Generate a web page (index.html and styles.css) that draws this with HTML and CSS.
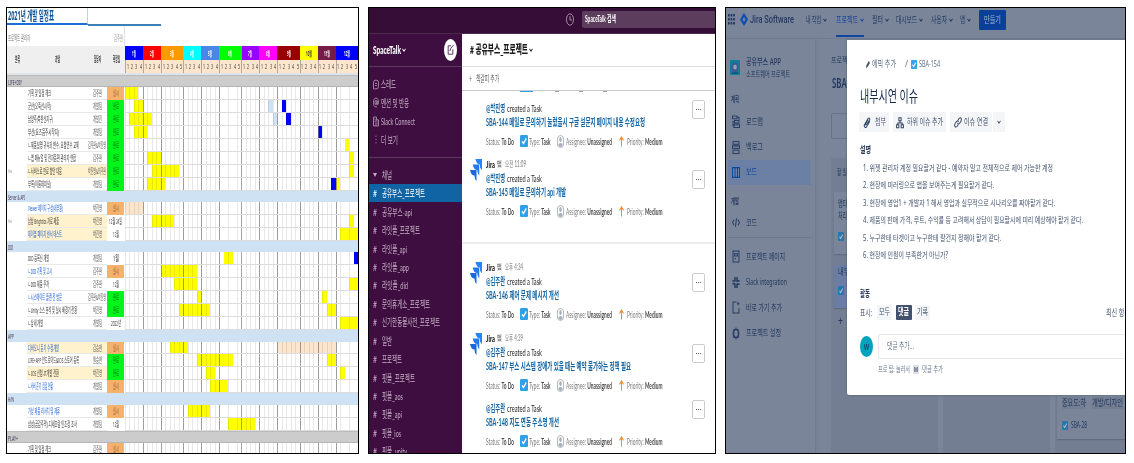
FILE: index.html
```html
<!DOCTYPE html>
<html lang="ko">
<head>
<meta charset="utf-8">
<title>Workspace</title>
<link rel="stylesheet" href="styles.css">
</head>
<body>
<svg class="defs" width="0" height="0" aria-hidden="true">
  <defs>
    <symbol id="check" viewBox="0 0 16 16" preserveAspectRatio="none"><rect width="16" height="16" rx="2" fill="#2f9fe8"/><path d="M4 8.5l3 3 5.500-7" fill="none" stroke="#fff" stroke-width="2.200"/></symbol>
    <symbol id="person" viewBox="0 0 16 26" preserveAspectRatio="none"><rect x="1" y="1" width="14" height="24" rx="7" fill="#fff" stroke="#a8b2bd" stroke-width="2"/><ellipse cx="8" cy="9" rx="3" ry="5" fill="#a8b2bd"/><path d="M3 20q0-4 5-4t5 4q-2 4-5 4t-5-4z" fill="#a8b2bd"/></symbol>
    <symbol id="up" viewBox="0 0 10 20" preserveAspectRatio="none"><path d="M5 19V3M1 8l4-6 4 6" fill="none" stroke="#ee8a2c" stroke-width="2"/></symbol>
    <symbol id="jira" viewBox="0 0 24 44" preserveAspectRatio="none"><path d="M11 0h13v22l-4-5v-9h-4z" fill="#2684ff"/><path d="M11 0h13v22q-4-3-4-11-7 0-9-11z" fill="#2684ff"/><path d="M5.500 11h13v22q-4-3-4-11-7 0-9-11z" fill="#2079f2"/><path d="M0 22h13v22q-4-3-4-11-7 0-9-11z" fill="#1668dc"/></symbol>
    <symbol id="down" viewBox="0 0 8 8" preserveAspectRatio="none"><path d="M1 2.500l3 3 3-3" fill="none" stroke="currentColor" stroke-width="1.600"/></symbol>
  </defs>
</svg>
<main class="shots">
  <section class="panel sheet">
    <div class="sheet-title"><div class="sel"><span class="t" data-w="46">2021년 개발 일정표</span></div><div class="rule"></div></div>
    <div class="sheet-owner"><span class="t" data-w="22">프로젝트 관리자</span><span class="t" data-w="9">김주완</span></div>
    <div class="sheet-head">
      <div class="hcells"><span class="h"><span class="t" data-w="5">분류</span></span><span class="h"><span class="t" data-w="5">과업</span></span><span class="h"><span class="t" data-w="7">담당자</span></span><span class="h"><span class="t" data-w="7">확정일</span></span></div>
      <div class="cal"><div class="months" id="months"></div><div class="weeks" id="weeks"></div></div>
    </div>
    <div class="freeze"></div>
    <div id="rows"></div>
  </section>

  <section class="panel slack">
    <div class="sl-top">
      <svg class="clock" viewBox="0 0 16 24" preserveAspectRatio="none"><ellipse cx="8" cy="12" rx="7" ry="10.500"/><path d="M8 6v7h4"/></svg>
      <div class="sl-search"><span class="t" data-w="31">SpaceTalk 검색</span></div>
    </div>
    <div class="sl-body">
      <aside class="sl-side">
        <div class="ws"><span class="t" data-w="28">SpaceTalk</span><svg class="dn"><use href="#down"/></svg><div class="compose"><svg viewBox="0 0 12 20" preserveAspectRatio="none"><path d="M7 3H2v14h8V9M5 12l1-4 5-6"/></svg></div></div>
        <nav class="sl-nav">
          <div class="it"><svg viewBox="0 0 12 20" preserveAspectRatio="none"><path d="M3 18H1V6q0-4 5-4t5 4v8q0 4-5 4zM4 8h4M4 12h4"/></svg><span class="t" data-w="15">스레드</span></div>
          <div class="it"><svg viewBox="0 0 12 20" preserveAspectRatio="none"><ellipse cx="6" cy="10" rx="2" ry="4"/><path d="M8 7v6q3 2 3-3 0-8-5-8t-5 8 5 8h2"/></svg><span class="t" data-w="28">멘션 및 반응</span></div>
          <div class="it"><svg viewBox="0 0 12 20" preserveAspectRatio="none"><path d="M1 18V2h6v5M1 18h10V7H6v11M3 6h2M3 10h1M8 11h1M8 14h1"/></svg><span class="t" data-w="34">Slack Connect</span></div>
          <div class="it"><svg viewBox="0 0 12 20" preserveAspectRatio="none"><path d="M6 3v2M6 9v2M6 15v2"/></svg><span class="t" data-w="17">더 보기</span></div>
        </nav>
        <div class="ch-head"><i></i><span class="t" data-w="10">채널</span></div>
        <div id="channels"></div>
      </aside>
      <div class="sl-main">
        <div class="ch-title"><span class="t" data-w="58">#&nbsp;공유부스_프로젝트</span><svg class="dn"><use href="#down"/></svg></div>
        <div class="bm"><span class="t" data-w="3">+</span><span class="t" data-w="23">책갈피 추가</span></div>
        <div class="feed">
          <div class="cut"><i></i><b></b><b></b><b></b></div>
          <div id="feed"></div>
        </div>
      </div>
    </div>
  </section>

  <section class="panel jira">
    <header class="j-nav">
      <svg class="apps" viewBox="0 0 7 11" preserveAspectRatio="none"><path d="M0 0h1.700v2.500H0zM2.600 0h1.700v2.500H2.600zM5.200 0h1.700v2.500H5.200zM0 4h1.700v2.500H0zM2.600 4h1.700v2.500H2.600zM5.200 4h1.700v2.500H5.200zM0 8h1.700v2.500H0zM2.600 8h1.700v2.500H2.600zM5.200 8h1.700v2.500H5.200z"/></svg>
      <svg class="dia" viewBox="0 0 16 26" preserveAspectRatio="none"><path d="M8 0l8 13-8 13L0 13z" fill="#0c4bb0"/><path d="M8 8l3 5-3 5-3-5z" fill="#7a8599"/></svg>
      <span class="t brand" data-w="44">Jira Software</span>
      <div class="menu m1"><span class="t" data-w="15">내 작업</span><svg class="dn"><use href="#down"/></svg></div>
      <div class="menu m2 on"><span class="t" data-w="22">프로젝트</span><svg class="dn"><use href="#down"/></svg></div>
      <div class="menu m3"><span class="t" data-w="11">필터</span><svg class="dn"><use href="#down"/></svg></div>
      <div class="menu m3"><span class="t" data-w="21">대시보드</span><svg class="dn"><use href="#down"/></svg></div>
      <div class="menu m3"><span class="t" data-w="16">사용자</span><svg class="dn"><use href="#down"/></svg></div>
      <div class="menu m3"><span class="t" data-w="5">앱</span><svg class="dn"><use href="#down"/></svg></div>
      <div class="make"><span class="t" data-w="17">만들기</span></div>
    </header>
    <div class="j-body">
      <aside class="j-side">
        <div class="proj"><svg viewBox="0 0 10 15" preserveAspectRatio="none"><rect width="10" height="15" rx="1" fill="#087f9d"/><ellipse cx="5" cy="7.500" rx="3.400" ry="5" fill="#514f96"/><ellipse cx="5" cy="7" rx="1.800" ry="2.600" fill="#8ba5bd"/><path d="M2 13h6" stroke="#20376c"/></svg><div><span class="t pn" data-w="35">공유부스 APP</span><span class="t ps" data-w="44">소프트웨어 프로젝트</span></div></div>
        <div class="grp g1"><span class="t" data-w="8">계획</span></div>
        <div class="ji"><svg viewBox="0 0 16 24" preserveAspectRatio="none"><path d="M1 2h9v5H1zM5 10h9v5H5zM4 18h11v5H4zM10 4h4v6M5 12H2v8h2"/></svg><span class="t" data-w="17">로드맵</span></div>
        <div class="ji"><svg viewBox="0 0 16 24" preserveAspectRatio="none"><path d="M2 1h12v5H2zM1 9h14v5H1zM2 17h12v6H2z"/></svg><span class="t" data-w="17">백로그</span></div>
        <div class="ji on"><svg viewBox="0 0 16 24" preserveAspectRatio="none"><path d="M1 3h14v18H1zM6 3v18M11 3v18"/></svg><span class="t" data-w="11">보드</span></div>
        <div class="grp g2"><span class="t" data-w="8">개발</span></div>
        <div class="ji code"><svg viewBox="0 0 16 24" preserveAspectRatio="none"><path d="M4 7l-3 5 3 5M12 7l3 5-3 5M9 4L7 20"/></svg><span class="t" data-w="11">코드</span></div>
        <div class="ji low"><svg viewBox="0 0 16 24" preserveAspectRatio="none"><path d="M2 2h12v20H2zM5 7h6v4H5zM5 16h3"/></svg><span class="t" data-w="39">프로젝트 페이지</span></div>
        <div class="ji low"><svg viewBox="0 0 16 24" preserveAspectRatio="none"><path class="bold" d="M6 2v8M1 9h5M10 2v9M10 9h5M6 14v8M1 14h5M10 14v8M10 15h5"/></svg><span class="t" data-w="41">Slack integration</span></div>
        <div class="ji low"><svg viewBox="0 0 16 24" preserveAspectRatio="none"><path d="M9 2H2v20h12v-9M12 2v6M15 5h-5"/></svg><span class="t" data-w="36">바로 가기 추가</span></div>
        <div class="ji low"><svg viewBox="0 0 16 24" preserveAspectRatio="none"><ellipse class="bold" cx="8" cy="12" rx="5" ry="7.500"/><path d="M8 1v3M8 20v3M1 12h2M13 12h2M3 4l2 3M13 4l-2 3M3 20l2-3M13 20l-2-3"/></svg><span class="t" data-w="35">프로젝트 설정</span></div>
      </aside>
      <div class="j-board">
        <div class="crumb"><span class="t" data-w="22">프로젝트</span></div>
        <div class="bt"><span class="t" data-w="31">SBA 보드</span></div>
        <div class="find"></div>
        <div class="cols">
          <div class="col">
            <div class="ct"><span class="t" data-w="10">할 일</span></div>
            <div class="card c1"><span class="t" data-w="14">앱타이</span><span class="t" data-w="9">처리</span><svg class="ck"><use href="#check"/></svg></div>
            <div class="card c2"><span class="t" data-w="17">내부시</span><svg class="ck"><use href="#check"/></svg></div>
            <div class="add"><span class="t" data-w="5">+</span></div>
          </div>
          <div class="col"></div>
          <div class="col last"><div class="card c3"><div class="tags"><span class="t" data-w="24">중요도:하</span><span class="t" data-w="31">개발/디자인</span></div><div class="key"><svg class="ck"><use href="#check"/></svg><span class="t" data-w="16">SBA-28</span></div></div></div>
        </div>
      </div>
    </div>
    <article class="modal">
      <div class="bc"><svg class="pen" viewBox="0 0 10 18" preserveAspectRatio="none"><path d="M0 18l1-6 6-10 3 4-6 10z"/></svg><span class="t" data-w="24">에픽 추가</span><span class="t sl" data-w="3">/</span><svg class="ck"><use href="#check"/></svg><span class="t" data-w="21">SBA-154</span></div>
      <h1><span class="t" data-w="58">내부시연 이슈</span></h1>
      <div class="acts">
        <div class="ab b1"><svg viewBox="0 0 14 22" preserveAspectRatio="none"><path d="M12 9l-6 10q-3 2-4-3l7-12q3-2 3 2L6 15q-2 1-2-1l5-8"/></svg><span class="t" data-w="11">첨부</span></div>
        <div class="ab b2"><svg viewBox="0 0 14 22" preserveAspectRatio="none"><path d="M5 3h4v5H5zM1 15h4v5H1zM9 15h4v5H9zM7 8v4M3 15v-3h8v3"/></svg><span class="t" data-w="36">하위 이슈 추가</span></div>
        <div class="ab b3"><svg viewBox="0 0 14 22" preserveAspectRatio="none"><path d="M6 9l3-5q3-3 4 2 0 3-3 6-2 3-4 0M8 13l-3 5q-3 2-4-2 0-3 3-6 2-3 4 0"/></svg><span class="t" data-w="24">이슈 연결</span></div>
        <div class="ab b4"><svg class="dn"><use href="#down"/></svg></div>
      </div>
      <h2 class="h-desc"><span class="t" data-w="11">설명</span></h2>
      <div class="list">
        <p><span class="t" data-w="190">1. 위젯 관리자 계정 필요할거 같다 - 예약자 말고 전체적으로 제어 가능한 계정</span></p>
        <p><span class="t" data-w="131">2. 현장에 미러링으로 앱을 보여주는게 필요할거 같다.</span></p>
        <p><span class="t" data-w="192">3. 현장에 영업1 + 개발자 1 해서 영업과 실무적으로 시나리오를 짜야할거 같다.</span></p>
        <p><span class="t" data-w="220">4. 제품의 판매 가격, 루트, 수익률 등 고려해서 상담이 필요할시에 미리 예상해야 할거 같다.</span></p>
        <p><span class="t" data-w="138">5. 누구한테 타겟이고 누구한테 팔건지 정해야 할거 같다.</span></p>
        <p><span class="t" data-w="85">6. 현장에 인원이 부족한거 아닌가?</span></p>
      </div>
      <h2 class="h-act"><span class="t" data-w="10">활동</span></h2>
      <div class="filter"><span class="t lab" data-w="12">표시:</span><div class="pill"><span class="t" data-w="11">모두</span></div><div class="pill dark"><span class="t" data-w="11">댓글</span></div><div class="pill"><span class="t" data-w="11">기록</span></div><span class="t sort" data-w="24">최신 항목</span></div>
      <div class="cm"><div class="av"><span class="t" data-w="5">W</span></div><div class="box"><span class="t" data-w="27">댓글 추가...</span></div></div>
      <div class="tip"><span class="t" data-w="32">프로 팁: 눌러서</span><kbd><span class="t" data-w="4">M</span></kbd><span class="t" data-w="21">댓글 추가</span></div>
    </article>
  </section>
</main>
<script src="app.js"></script>
</body>
</html>
```

FILE: styles.css
```css
* { box-sizing: border-box; }
body { margin: 0; background: #fff; font-family: "Noto Sans", "Noto Sans CJK KR", sans-serif; overflow: hidden; }
.defs { position: absolute; }
.t { display: inline-block; white-space: nowrap; flex: none; text-align: left; }
.t > span { display: inline-block; transform-origin: 0 50%; }
svg { display: block; flex: none; }
.dn { width: 4px; height: 6px; }

.shots { display: flex; padding: 7px 0 0 6px; }
.panel { height: 447px; border: 1px solid #000; overflow: hidden; flex: none; position: relative; }
.sheet { width: 353px; }
.slack { width: 348px; margin-left: 9px; }
.jira { width: 401px; margin-left: 9px; }

/* schedule sheet */
.sheet { font-size: 7.800px; line-height: 13px; color: #333; }
.sheet-title { display: flex; height: 18px; }
.sel { width: 81px; border-right: 1px solid #bcd1ee; border-bottom: 2px solid #1c6fd6; height: 17px; padding-left: 1px; font-size: 13px; line-height: 15px; font-weight: 700; color: #0b5394; }
.rule { width: 73px; height: 2px; margin-top: 16px; background: #3d7fb5; }
.sheet-owner { display: flex; justify-content: space-between; width: 118px; height: 20px; padding: 6px 1px 0; color: #777; border-right: 1px solid #dde4ee; }
.sheet-owner .t:last-child { color: #999; }
.sheet-head { display: flex; height: 27px; }
.hcells { display: grid; grid-template-columns: 20px 60px 20px 18px; width: 118px; background: #efefef; font-weight: 700; color: #333; padding-top: 7px; }
.h { display: flex; justify-content: center; }
.cal { width: 233px; }
.months { display: grid; grid-template-columns: repeat(52, 1fr); height: 14px; }
.mo { display: flex; justify-content: center; align-items: center; color: #fff; font-size: 7px; font-weight: 700; }
.weeks { display: grid; grid-template-columns: repeat(52, 1fr); height: 13px; background: #fce5cd; font-size: 6.500px; line-height: 13px; color: #333; }
.wk { display: flex; justify-content: center; }
.wk.first { border-left: 1px solid #b5a79a; }
.freeze { height: 2px; background: #dfe4ea; }
.band { height: 11.400px; background: #cfe2f3; color: #403050; line-height: 12px; padding-left: 1px; }
.band.gray { height: 12.400px; background: #ccc; line-height: 12px; border-top: 1px solid #bbb; border-bottom: 1px solid #b5b5b5; }
.row { display: flex; height: 12.940px; }
.tag { width: 20px; padding-left: 1px; font-size: 5px; color: #999; }
.task { width: 60px; border-bottom: 1px solid #e8e8e8; padding-left: 1px; }
.who { width: 20px; text-align: center; border-bottom: 1px solid #e8e8e8; color: #555; }
.st { width: 17px; text-align: center; margin-right: 1px; }
.hl .task, .hl .who { background: #fff2cc; }
.link { color: #1d5fd0; text-decoration: underline; }
.st.done { background: #00f51a; color: #087012; }
.st.open { background: #f6b26b; color: #8d6138; }
.track { position: relative; width: 233px; display: grid; grid-template-columns: repeat(52, 1fr); border-bottom: 1px solid #dcdcdc; }
.track::after { content: ""; position: absolute; inset: 0; background: var(--months), repeating-linear-gradient(90deg, rgba(0,0,0,.09) 0 .9px, transparent .9px 4.481px); }
.track { --months:
  linear-gradient(#777a, #777a) 17.500px 0 / 1px 100% no-repeat, linear-gradient(#777a, #777a) 35.500px 0 / 1px 100% no-repeat,
  linear-gradient(#777a, #777a) 58px 0 / 1px 100% no-repeat, linear-gradient(#777a, #777a) 76px 0 / 1px 100% no-repeat,
  linear-gradient(#777a, #777a) 94px 0 / 1px 100% no-repeat, linear-gradient(#777a, #777a) 116px 0 / 1px 100% no-repeat,
  linear-gradient(#777a, #777a) 134px 0 / 1px 100% no-repeat, linear-gradient(#777a, #777a) 152px 0 / 1px 100% no-repeat,
  linear-gradient(#777a, #777a) 175px 0 / 1px 100% no-repeat, linear-gradient(#777a, #777a) 193px 0 / 1px 100% no-repeat,
  linear-gradient(#777a, #777a) 211px 0 / 1px 100% no-repeat; }
.bar { grid-row: 1; background: #ff0; }
.bar.b { background: #00f; }
.bar.l { background: #cfe2f3; }
.bar.p { background: #fce5cd; }

/* chat */
.slack { font-family: Lato, "Noto Sans CJK KR", sans-serif; font-size: 10px; line-height: 14px; color: #1d1c1d; }
.sl-top { height: 26px; background: #350d36; display: flex; padding: 3px 0 0 197px; border-bottom: 1px solid #4d2a4e; }
.clock { width: 8px; height: 13px; margin-top: 2px; fill: none; stroke: #c5b6c6; stroke-width: 1.500; }
.sl-search { margin-left: 8px; flex: 1; height: 17px; background: #5d3d5e; border-radius: 2px 0 0 2px; color: #fff; padding: 0 3px; line-height: 16px; font-size: 9.500px; font-weight: 700; }
.sl-body { display: flex; height: 419px; }
.sl-side { width: 93px; background: #3f0e40; color: #c4afc5; font-size: 10px; overflow: hidden; }
.ws { height: 33px; display: flex; align-items: center; padding-left: 4px; border-bottom: 1px solid #5c3a5d; color: #fff; font-weight: 900; font-size: 12px; }
.ws .dn, .ch-title .dn { margin-left: 1px; }
.compose { margin-left: 38px; width: 13px; height: 22px; border-radius: 50%; background: #fff; display: flex; align-items: center; justify-content: center; }
.compose svg { width: 7px; height: 12px; fill: none; stroke: #3f0e40; stroke-width: 1.400; }
.sl-nav { height: 91px; padding-top: 8px; border-bottom: 1px solid #5c3a5d; }
.it { display: flex; align-items: center; height: 18.500px; padding-left: 4px; gap: 3px; }
.it svg { width: 6px; height: 11px; margin-right: -1px; fill: none; stroke: #b9a3ba; stroke-width: 1.500; }
.it .t { margin-left: 0; }
.ch-head { display: flex; align-items: center; height: 26px; padding: 8px 0 0 4px; }
.ch-head i { border: 2px solid transparent; border-top: 4px solid #c4afc5; border-bottom: 0; margin-right: 5px; }
.ch { display: flex; align-items: center; height: 18.450px; padding-left: 4px; gap: 5px; }
.ch.on { background: #1164a3; color: #fff; }
.sl-main { width: 253px; }
.ch-title { height: 33px; display: flex; align-items: center; padding-left: 8px; border-bottom: 1px solid #ddd; font-weight: 900; font-size: 12px; }
.bm { height: 24px; display: flex; align-items: center; padding-left: 7px; gap: 4px; border-bottom: 1px solid #ccc; color: #616061; font-size: 9px; }
.cut { height: 10px; display: flex; padding-left: 58px; align-items: flex-start; }
.cut i { width: 13px; height: 1px; background: #2d9ee0; margin-right: 22px; }
.cut b { width: 4px; height: 1px; background: #999; margin-right: 20px; }
.msg { display: flex; padding-left: 8px; }
.pic { width: 12px; margin-right: 4px; padding-top: 2px; }
.pic svg { width: 12px; height: 22px; }
.mb { width: 206px; }
.l1, .l2, .l3 { height: 14px; display: flex; align-items: center; }
.who2 { font-weight: 900; margin-right: 2px; }
.app { background: #e4e4e4; color: #666; font-size: 6px; line-height: 8px; margin-right: 3px; }
.tm { color: #777; font-size: 8.500px; }
.at { color: #1264a3; font-weight: 700; margin-right: 2px; }
.l2 { color: #1264a3; font-weight: 700; font-size: 10.500px; }
.l3 { margin-top: 6px; color: #7c7c7c; font-size: 9.500px; }
.l3 b { font-weight: 700; color: #4a4a4a; }
.l3 .c { width: 8px; height: 12px; margin: -2px 1px 0 6px; }
.l3 .p { width: 7px; height: 13px; margin: -2px 2px 0 6px; }
.l3 .u { width: 5px; height: 11px; margin: -2px 3px 0 7px; }
.more { width: 13px; height: 19px; border: 1px solid #ccc; border-radius: 2px; display: flex; align-items: center; justify-content: center; gap: .6px; margin-top: 13px; }
.more i { width: 1.400px; height: 1.500px; background: #666; }
.nohead .more { margin-top: -1px; }
.sep { height: 2px; background: #ececec; margin-top: 23px; margin-bottom: 16px; }

/* board */
.jira { background: #7a8599; color: #23385e; font-size: 9px; line-height: 12px; }
.j-nav { height: 31px; display: flex; align-items: flex-start; padding: 6px 0 0 2px; border-bottom: 1px solid #6f7b91; line-height: 12px; }
.apps { width: 7px; height: 11px; fill: #213760; }
.dia { width: 8px; height: 13px; margin: -1px 2px 0 5px; }
.brand { font-family: Roboto, sans-serif; font-size: 11px; font-weight: 500; color: #253a62; }
.menu { display: flex; align-items: center; height: 24px; padding-bottom: 12px; gap: 2px; }
.m1 { margin-left: 12px; }
.m2 { margin-left: 9px; height: 23px; }
.m3 { margin-left: 7.500px; }
.menu.on { color: #0c469d; border-bottom: 2px solid #0c469d; padding-bottom: 9px; }
.make { background: #0b409a; color: #a9b9d6; margin: -4px 0 0 8px; height: 20px; width: 27px; border-radius: 1px; padding-left: 5px; line-height: 20px; }
.j-body { display: flex; height: 414px; }
.j-side { width: 90px; border-right: 1px solid #707c92; box-shadow: 1px 0 2px #717d9388; padding-top: 17px; }
.proj { display: flex; padding-left: 4px; gap: 6px; height: 37px; line-height: 12px; }
.proj > svg { width: 10px; height: 15px; margin-top: 4px; }
.proj .t { display: block; }
.pn { font-weight: 500; }
.ps { font-size: 8px; }
.grp { padding-left: 5px; font-size: 7.500px; font-weight: 700; height: 16px; }
.ji { display: flex; align-items: center; height: 25.400px; padding-left: 4px; gap: 6px; margin: 0 4px 0 2px; }
.ji svg { width: 8px; height: 13px; fill: none; stroke: #263c65; stroke-width: 1.900; }
.ji .bold { stroke-width: 3; }
.ji.on { background: #6c80a6; color: #0c469d; }
.ji.on svg { stroke: #0c469d; }
.g2 { padding-top: 10px; height: 23px; }
.ji.code { height: 30px; border-bottom: 1px solid #6c788e; margin-bottom: 6px; }
.j-board { padding: 15px 0 0 15px; width: 309px; }
.crumb { height: 20px; font-size: 8px; }
.bt { height: 39px; font-size: 14px; line-height: 18px; font-weight: 600; padding-left: 1px; }
.find { height: 26px; width: 60px; border: 1px solid #66738b; border-radius: 2px; }
.cols { display: flex; gap: 5px; margin-top: 19px; width: 294px; }
.col { width: 107px; height: 300px; background: #737e92; flex: none; }
.ct { height: 34px; padding: 8px 0 0 6px; font-size: 8px; }
.card { background: #7a8599; box-shadow: 0 1px 1px #606c82; }
.card .t { display: block; }
.ck { width: 6px; height: 9px; opacity: .95; }
.jira .col .ck { filter: brightness(.75); }
.c1 { margin: 0 3px; height: 62px; padding: 6px 4px; }
.c1 .ck { margin-top: 10px; }
.c2 { margin: 11px 3px 0; height: 43px; padding: 1px 4px; background: #6b7da5; }
.c2 .ck { margin-top: 8px; }
.add { padding: 7px 0 0 7px; font-size: 12px; }
.col.last { padding-top: 234px; }
.c3 { margin: 0 2px; height: 47px; padding: 5px 5px; }
.tags { display: flex; gap: 6px; }
.tags .t { background: #737e92; }
.key { display: flex; align-items: center; gap: 3px; margin-top: 10px; }
.modal { position: absolute; left: 121px; top: 32px; width: 279px; height: 355px; background: #fff; border-bottom-left-radius: 2px; box-shadow: 0 0 2px #45536b; color: #42526e; padding-left: 12px; overflow: hidden; }
.bc { display: flex; align-items: center; height: 16px; margin-top: 16px; padding-left: 7px; color: #5e6c84; }
.pen { width: 4px; height: 8px; margin-right: 2px; fill: #42526e; }
.sl { margin: 0 3px 0 9px; }
.bc .ck { margin-right: 2px; }
h1, h2, p { margin: 0; }
h1 { height: 24px; margin: 12px 0 0 1px; font-size: 16px; line-height: 24px; font-weight: 400; color: #172b4d; }
.acts { display: flex; margin-top: 4px; height: 20px; gap: 4px; }
.ab { display: flex; align-items: center; background: #f4f5f7; border-radius: 1px; padding-left: 4px; gap: 4px; }
.ab svg:not(.dn) { width: 8px; height: 13px; fill: none; stroke: #344563; stroke-width: 1.700; }
.b1 { width: 30px; }
.b2 { width: 53px; padding-left: 3px; gap: 3px; }
.b3 { width: 42px; gap: 2px; }
.b4 { width: 12px; margin-left: -3px; }
h2 { font-size: 9px; font-weight: 700; line-height: 12px; padding-left: 1px; color: #253858; }
.h-desc { margin-top: 12px; }
.list { margin-top: 3px; padding-left: 4px; font-size: 8.500px; }
.list p { height: 17.400px; line-height: 17.400px; }
.h-act { margin-top: 25px; }
.filter { display: flex; height: 15px; align-items: center; margin-top: 5px; padding-left: 1px; }
.lab { margin-right: 5px; }
.pill { width: 15px; height: 15px; background: #f4f5f7; border-radius: 1px; padding-left: 2px; margin-right: 3.500px; line-height: 14px; flex: none; }
.pill.dark { background: #42526e; color: #fff; font-weight: 600; width: 16px; }
.sort { margin-left: 172px; }
.cm { display: flex; margin-top: 14px; gap: 5px; padding-left: 1px; height: 25px; align-items: center; }
.av { width: 13px; height: 21px; border-radius: 50%; background: #00a3bf; color: #12385c; display: flex; align-items: center; justify-content: center; font-size: 8px; font-weight: 600; flex: none; }
.box { flex: 1; height: 25px; border: 1px solid #e6e8ec; border-right: 0; border-radius: 2px 0 0 2px; padding-left: 8px; line-height: 22px; color: #6b778c; }
.tip { display: flex; margin-top: 4px; padding-left: 19px; font-size: 7.500px; align-items: center; gap: 3px; color: #6b778c; }
kbd { background: #dfe1e6; width: 6px; height: 9px; padding-left: 1px; font: 600 7px/9px "Noto Sans", sans-serif; color: #344563; }
```

FILE: app.js
```js
const t = (text, w, cls = "") => `<span class="t ${cls}" data-w="${w}">${text}</span>`;

/* months: name, number of weeks, colour */
const months = [["1월",4,"#0000ff"],["2월",4,"#ff0000"],["3월",5,"#ff9900"],["4월",4,"#00ffff"],["5월",4,"#4a86e8"],["6월",5,"#00ff00"],["7월",4,"#9900ff"],["8월",4,"#ff00ff"],["9월",5,"#990000"],["10월",4,"#ffff00"],["11월",4,"#741b47"],["12월",5,"#0000ff"]];
document.getElementById("months").innerHTML = months.map(([n, w, c]) =>
  `<div class="mo" style="grid-column:span ${w};background:${c}${c === "#ffff00" ? ";color:#333" : ""}">${t(n, n.length > 2 ? 6 : 4)}</div>`).join("");
document.getElementById("weeks").innerHTML = months.map(([, w]) =>
  Array.from({ length: w }, (_, i) => `<div class="wk${i ? "" : " first"}">${t(i + 1, 2)}</div>`).join("")).join("");

/* rows: task, width, person, status, bars [from, to, kind], flags (h highlight, l link) */
const rows = [
  ["#LIFE+DIY", 14, "gray"],
  ["기획 및 일정 체크", 23, "김주완", "실시", [[0,3]]],
  ["군산(오죽선시작)", 23, "개발팀", "완료", [[2,4],[32,33,"l"],[35,36,"b"]]],
  ["남양주(북한산지구)", 25, "개발진", "완료", [[1,6],[33,34,"l"],[36,37,"b"]]],
  ["부산(요즈음주시작지)", 31, "개발팀", "완료", [[2,5],[43,44,"b"]]],
  ["ㄴ제품설명 귀속과 변수, 요청연수 교체", 51, "김주완&박진영", "완료", [[49,50]]],
  ["ㄴ앱 매뉴얼 및 전자음편 관리자 연합", 48, "김주완", "완료", [[5,8],[50,51]]],
  ["ㄴ서비스료 만료 향안 대응", 34, "박진영&최주완", "완료", [[6,12],[50,51]], "h", "New"],
  ["부록(이름데미널)", 23, "개발팀", "완료", [[5,9],[46,47,"b"],[47,48]]],
  ["#Server & API", 17, ""],
  ["Viewer 페이지 구성(내부용)", 35, "박진영", "실시", [[0,4,"p"]], "l"],
  ["삼성 Brightics 자료 제출", 31, "박진영", "12월 24일", [[6,11],[50,51]], "h", "New"],
  ["데이블 페이지 센서 테스트", 34, "박진영", "12월", [[48,52]], "hl"],
  ["#DID", 5, ""],
  ["DID 등록신 개발", 21, "개발팀", "1월", [[22,24],[51,52,"b"]]],
  ["ㄴDID 기획 및 고시", 24, "김주완", "실시", [[8,16]], "l"],
  ["ㄴDID 제품 주차", 21, "김주완", "12월", [[11,16],[50,52]]],
  ["ㄴ시스메이트 플랜 전 방문", 34, "김주완&박진영", "완료", [[16,17],[44,45]], "l"],
  ["ㄴUnity 소스 분석 및 실시 배경기 전용", 49, "박진영", "완료", [[12,19],[45,47]]],
  ["ㄴ상세 개발", 15, "개발팀", "2022년", [[48,52]]],
  ["#APP", 6, ""],
  ["디바오니 듣기 수정개발", 31, "김승현", "실시", [[10,14],[34,47,"p"]], "hl"],
  ["LIFE+APP 안드로이드&IOS 스토어 등록", 51, "원승현", "완료", [[16,24],[45,47]]],
  ["ㄴIOS 신청-IT개발 전환", 31, "박진영", "완료", [[18,20],[48,49]], "h"],
  ["ㄴ서버 준기 점검 현황", 25, "개발팀", "실시", [[19,23]], "l"],
  ["#H/W", 6, ""],
  ["기성 제품 리서치 및 제휴", 32, "개발팀", "실시", [[14,19]], "l"],
  ["삼성(공감주막)-디세조람 인조장 조사", 49, "개발팀", "12월", [[23,29]]],
  ["#PLAY+", 10, "gray"],
  ["기획 및 일정 체크", 23, "김주완", "실시", []]
];
const kinds = { "완료": "done", "실시": "open" };
document.getElementById("rows").innerHTML = rows.map(([name, w, who, st, bars, flags = "", tag = ""]) => {
  if (name[0] === "#") return `<div class="band ${who}">${t(name.slice(1), w)}</div>`;
  const b = bars.map(([a, z, k = ""]) => `<div class="bar ${k}" style="grid-column:${a + 1}/${z + 1}"></div>`).join("");
  return `<div class="row${flags.includes("h") ? " hl" : ""}"><div class="tag">${tag ? t(tag, 4) : ""}</div><div class="task">${t(name, w, flags.includes("l") ? "link" : "")}</div><div class="who">${t(who, who.length > 3 ? 18 : 9)}</div><div class="st ${kinds[st] || ""}">${t(st, st.length > 5 ? 13 : st.length > 4 ? 10 : 6)}</div><div class="track">${b}</div></div>`;
}).join("");

const channels = [["공유부스_프로젝트",43],["공유부스-api",30],["라잇플_프로젝트",38],["라잇플_api",25],["라잇플_app",27],["라잇플_did",26],["문의휴게소_프로젝트",48],["신기한동물사전_프로젝트",58],["일반",10],["프로젝트",20],["핏플_프로젝트",33],["핏플_aos",21],["핏플_api",20],["핏플_ios",19],["핏플_unity",25]];
document.getElementById("channels").innerHTML = channels.map(([n, w], i) =>
  `<div class="ch${i ? "" : " on"}">${t("#", 4)}${t(n, w)}</div>`).join("");

/* messages: time, author, title, width, gap above */
const msgs = [
  ["", "박진영", "SBA-144 메일로 문의하기 눌렀을시 구글 설문지 페이지 내용 수정요청", 159, 0],
  ["오전 11:09", "박진영", "SBA-145 메일로 문의하기 api 개발", 80, 8],
  null,
  ["오후 4:34", "김주완", "SBA-146 제어 문제 메시지 개선", 73, 0],
  ["오후 4:39", "김주완", "SBA-147 부스 시스템 장애가 있을 때는 예약 불가하는 정책 필요", 145, 9],
  ["", "김주완", "SBA-148 지도 연동 주소명 개선", 73, 8]
];
document.getElementById("feed").innerHTML = msgs.map(m => {
  if (!m) return `<div class="sep"></div>`;
  const [time, who, title, w, gap] = m;
  return `<div class="msg${time ? "" : " nohead"}" style="margin-top:${gap}px"><div class="pic">${time ? `<svg><use href="#jira"/></svg>` : ""}</div><div class="mb">
  ${time ? `<div class="l1">${t("Jira", 9, "who2")}${t("앱", 4.500, "app")}${t(time, time.length > 7 ? 21 : 18, "tm")}</div>` : ""}
  <div class="l1">${t("@" + who, 19, "at")}${t("created a Task", 35)}</div>
  <div class="l2">${t(title, w)}</div>
  <div class="l3">${t("Status: <b>To Do</b>", 28)}<svg class="c"><use href="#check"/></svg>${t("Type: <b>Task</b>", 21.500)}<svg class="p"><use href="#person"/></svg>${t("Assignee: <b>Unassigned</b>", 46)}<svg class="u"><use href="#up"/></svg>${t("Priority: <b>Medium</b>", 35.500)}</div>
  </div><div class="more"><i></i><i></i><i></i></div></div>`;
}).join("");

document.querySelectorAll(".t").forEach(el => {
  const inner = document.createElement("span");
  while (el.firstChild) inner.appendChild(el.firstChild);
  el.appendChild(inner);
  const natural = inner.getBoundingClientRect().width;
  el.style.width = el.dataset.w + "px";
  inner.style.transform = `scaleX(${el.dataset.w / natural})`;
});
```
